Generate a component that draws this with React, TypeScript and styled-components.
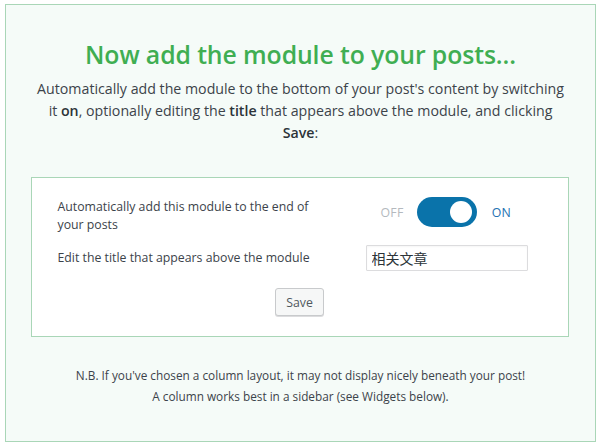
import React, { useState } from "react";
import styled, { createGlobalStyle } from "styled-components";

const Global = createGlobalStyle`
  html, body { margin: 0; padding: 0; background: #ffffff; }
  body { font-family: "Open Sans", "Noto Sans", Arial, sans-serif; color: #3c434a; }
  * { box-sizing: border-box; }
`;

const Page = styled.div`
  width: 602px;
  height: 446px;
  padding: 4px 6px 4px 5px;
`;

const Panel = styled.section`
  width: 591px;
  height: 438px;
  border: 1px solid #a9d6b7;
  background: #f5fbf8;
  display: flex;
  flex-direction: column;
  align-items: center;
  padding: 32px 26px 0 26px;
`;

const Title = styled.h2`
  margin: 0;
  font-size: 24.8px;
  font-weight: 600;
  color: #3fae52;
  line-height: 34px;
  letter-spacing: -0.1px;
`;

const Intro = styled.p`
  margin: 7px 0 0 0;
  font-size: 14.2px;
  line-height: 22px;
  text-align: center;
  color: #3c434a;
  strong { font-weight: 600; color: #2c3338; }
`;

const Card = styled.div`
  margin: 33px 2px 0 0;
  width: 538px;
  height: 160px;
  background: #ffffff;
  border: 1px solid #a9d6b7;
  padding: 20px 26px 0 26px;
  display: flex;
  flex-direction: column;
`;

const Row = styled.div<{ $top: number; $align: string }>`
  display: grid;
  grid-template-columns: 308px 1fr;
  align-items: ${(p) => p.$align};
  margin-top: ${(p) => p.$top}px;
`;

const Label = styled.div`
  width: 262px;
  font-size: 12.3px;
  line-height: 18px;
  color: #3c434a;
`;

const ToggleWrap = styled.div`
  display: flex;
  align-items: center;
  padding-left: 15px;
  margin-top: -1px;
`;

const ToggleText = styled.span<{ $active: boolean }>`
  font-size: 12.3px;
  color: ${(p) => (p.$active ? "#2271b1" : "#b4b9be")};
  letter-spacing: 0.3px;
`;

const Switch = styled.button<{ $on: boolean }>`
  position: relative;
  width: 60px;
  height: 30px;
  margin: 0 15px 0 13px;
  border: none;
  border-radius: 15px;
  background: ${(p) => (p.$on ? "#0a73aa" : "#c3c4c7")};
  padding: 0;
  cursor: pointer;
  &::after {
    content: "";
    position: absolute;
    top: 4px;
    left: ${(p) => (p.$on ? "33px" : "5px")};
    width: 22px;
    height: 22px;
    border-radius: 50%;
    background: #ffffff;
  }
`;

const Input = styled.input`
  width: 162px;
  height: 26px;
  border: 1px solid #dcdcde;
  border-radius: 1px;
  padding: 0 5px;
  font-family: "Noto Sans CJK SC", sans-serif;
  font-size: 14px;
  color: #2c3338;
  background: #fff;
  box-shadow: inset 0 1px 2px rgba(0, 0, 0, 0.04);
  outline: none;
`;

const Actions = styled.div`
  display: flex;
  justify-content: center;
  margin-top: 17px;
`;

const SaveButton = styled.button`
  height: 28px;
  padding: 0 10px;
  font-family: "Open Sans", "Noto Sans", Arial, sans-serif;
  font-size: 12.3px;
  color: #50575e;
  background: #f6f7f7;
  border: 1px solid #c8cacc;
  border-radius: 3px;
  box-shadow: 0 1px 0 #dcdcde;
  cursor: pointer;
`;

const Note = styled.p`
  margin: 28px 0 0 0;
  font-size: 11.8px;
  line-height: 21px;
  text-align: center;
  color: #3c434a;
`;

export default function App() {
  const [on, setOn] = useState(true);
  return (
    <Page>
      <Global />
      <Panel>
        <Title>Now add the module to your posts...</Title>
        <Intro>
          Automatically add the module to the bottom of your post's content by switching
          <br />
          it <strong>on</strong>, optionally editing the <strong>title</strong> that appears above the module, and clicking
          <br />
          <strong>Save</strong>:
        </Intro>
        <Card>
          <Row $top={0} $align="start">
            <Label>Automatically add this module to the end of your posts</Label>
            <ToggleWrap>
              <ToggleText $active={false}>OFF</ToggleText>
              <Switch $on={on} onClick={() => setOn(!on)} aria-label="toggle" />
              <ToggleText $active>ON</ToggleText>
            </ToggleWrap>
          </Row>
          <Row $top={11} $align="center">
            <Label>Edit the title that appears above the module</Label>
            <div>
              <Input defaultValue="相关文章" />
            </div>
          </Row>
          <Actions>
            <SaveButton>Save</SaveButton>
          </Actions>
        </Card>
        <Note>
          N.B. If you've chosen a column layout, it may not display nicely beneath your post!
          <br />
          A column works best in a sidebar (see Widgets below).
        </Note>
      </Panel>
    </Page>
  );
}
